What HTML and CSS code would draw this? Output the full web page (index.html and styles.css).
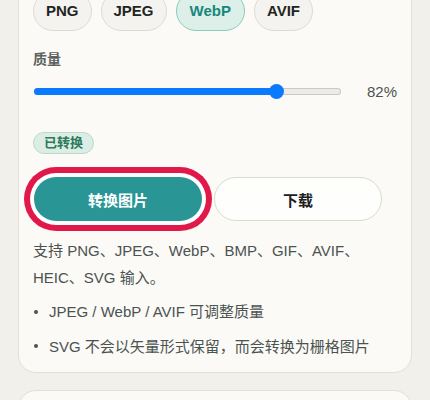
FILE: index.html
```html
<!DOCTYPE html>
<html lang="zh-CN">
<head>
<meta charset="utf-8">
<title>图片转换</title>
<link rel="stylesheet" href="styles.css">
</head>
<body>
<div class="page">
  <section class="card">
    <div class="chips">
      <button class="chip">PNG</button>
      <button class="chip">JPEG</button>
      <button class="chip chip-active">WebP</button>
      <button class="chip">AVIF</button>
    </div>
    <div class="label">质量</div>
    <div class="slider-row">
      <div class="track">
        <div class="fill" style="width: 78.9%"><span class="thumb"></span></div>
      </div>
      <span class="value">82%</span>
    </div>
    <div class="badge-row"><span class="badge">已转换</span></div>
    <div class="actions">
      <button class="btn btn-primary">转换图片</button>
      <button class="btn btn-secondary">下载</button>
    </div>
    <p class="desc">支持 PNG、JPEG、WebP、BMP、GIF、AVIF、HEIC、SVG 输入。</p>
    <ul class="notes">
      <li><span class="dot"></span><span>JPEG / WebP / AVIF 可调整质量</span></li>
      <li><span class="dot"></span><span>SVG 不会以矢量形式保留，而会转换为栅格图片</span></li>
    </ul>
  </section>
  <section class="card card-next"></section>
</div>
</body>
</html>
```
FILE: styles.css
```css
html, body {
  margin: 0;
  padding: 0;
  background: #f1f0eb;
  font-family: "Liberation Sans", "Noto Sans CJK SC", sans-serif;
  color: #4b5350;
  overflow: hidden;
}
.page {
  padding: 0 18px;
}
.card {
  background: #fbfaf7;
  border: 1px solid #e2dfd7;
  border-radius: 18px;
  padding: 14px 14px 12px;
  margin-top: -24px;
}
.card-next {
  margin-top: 17px;
  height: 120px;
}
.chips {
  display: flex;
  gap: 9px;
}
.chip {
  font-family: inherit;
  font-size: 15px;
  font-weight: 700;
  line-height: 18px;
  padding: 10px 12px;
  border: 1px solid #dedbd3;
  background: #f4f3ef;
  color: #1f2523;
  border-radius: 20px;
}
.chip-active {
  background: #dcefe8;
  border-color: #8ccbbd;
  color: #17877d;
  padding: 10px 13px;
}
.label {
  margin-top: 18px;
  font-size: 14px;
  line-height: 20px;
  font-weight: 700;
  color: #5b625f;
}
.slider-row {
  margin-top: 12px;
  height: 20px;
  display: grid;
  grid-template-columns: 1fr 44px;
  gap: 12px;
  align-items: center;
}
.track {
  height: 7px;
  margin-left: 1px;
  border-radius: 4px;
  background: #ecebe8;
  box-shadow: inset 0 0 0 1px #c9c9c5;
  display: flex;
}
.fill {
  height: 100%;
  background: #0a7aff;
  border-radius: 4px;
  display: flex;
  align-items: center;
  justify-content: flex-end;
}
.thumb {
  flex-shrink: 0;
  width: 15px;
  height: 15px;
  border-radius: 50%;
  background: #0a7aff;
  margin-right: -7.5px;
}
.value {
  text-align: right;
  font-size: 15px;
  color: #4b5350;
}
.badge-row {
  display: flex;
  margin-top: 31px;
}
.badge {
  font-size: 13px;
  font-weight: 700;
  line-height: 18px;
  padding: 1px 10px;
  border: 1px solid #b9dacb;
  background: #dcede5;
  color: #2b7a59;
  border-radius: 12px;
}
.actions {
  margin-top: 23px;
  display: grid;
  grid-template-columns: 1fr 1fr;
  gap: 12px;
  max-width: 348px;
  padding-left: 1px;
}
.btn {
  font-family: inherit;
  height: 44px;
  border-radius: 22px;
  font-size: 15px;
  font-weight: 700;
}
.btn-primary {
  background: #299595;
  color: #ffffff;
  border: none;
  box-shadow: 0 0 0 4px #ffffff, 0 0 0 10px #e0194a;
}
.btn-secondary {
  background: #fefefc;
  color: #1c201f;
  border: 1px solid #dcd9d1;
}
.desc {
  margin: 16px 0 0;
  font-size: 15px;
  line-height: 27px;
  color: #4b5350;
}
.notes {
  list-style: none;
  margin: 7px 0 0;
  padding: 0;
}
.notes li {
  display: flex;
  align-items: center;
  gap: 11px;
  font-size: 15px;
  line-height: 27px;
  color: #4b5350;
}
.notes li + li {
  margin-top: 7.5px;
}
.dot {
  width: 4px;
  height: 4px;
  border-radius: 50%;
  background: #4b5350;
  margin-left: 1px;
  flex-shrink: 0;
}
```
